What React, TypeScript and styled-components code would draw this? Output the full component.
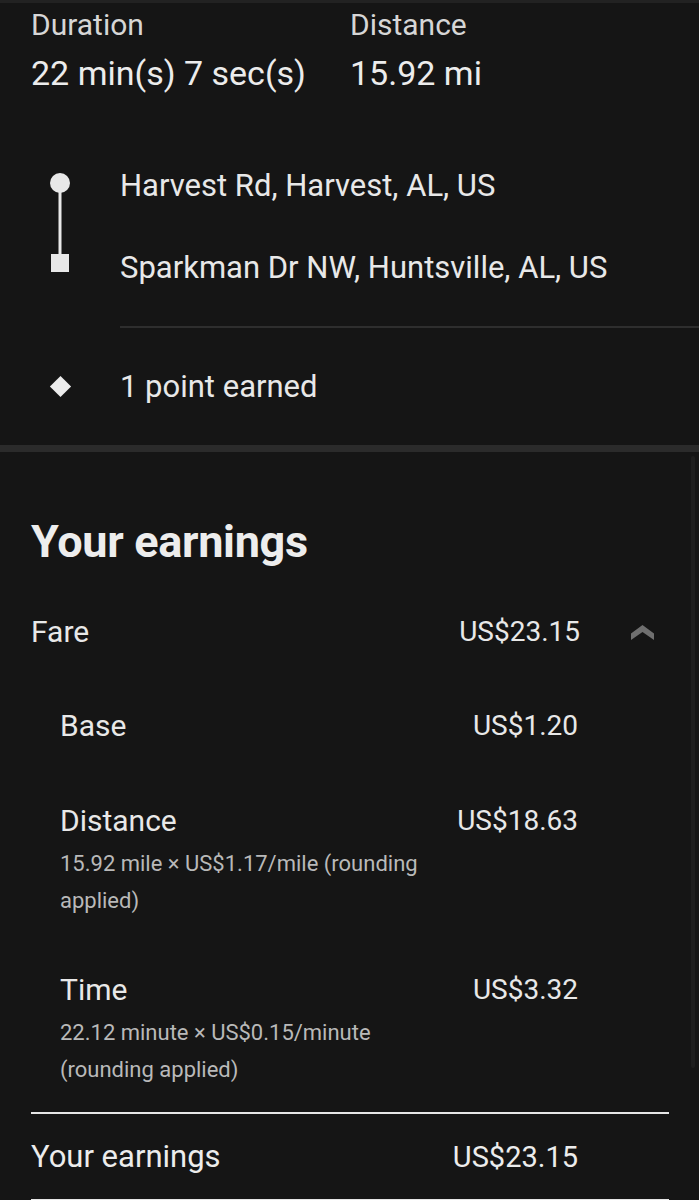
import styled, { createGlobalStyle } from "styled-components";

const GlobalStyle = createGlobalStyle`
    html, body {
        margin: 0;
        padding: 0;
        background: #151515;
    }
    body {
        font-family: Roboto, "Liberation Sans", sans-serif;
        color: #e8e8e8;
    }
`

const Page = styled.div`
    width: 699px;
    height: 1200px;
    overflow: hidden;
    background: #151515;
    border-top: 3px solid #222222;
    box-sizing: border-box;
    position: relative;
`

const StatsRow = styled.div`
    display: grid;
    grid-template-columns: 319px 1fr;
    padding: 5px 31px 0;
`

const Stat = styled.div`
    display: flex;
    flex-direction: column;
`

const StatLabel = styled.span`
    font-size: 30px;
    line-height: 34px;
    color: #d6d6d6;
`

const StatValue = styled.span`
    font-size: 34px;
    line-height: 40px;
    margin-top: 11px;
    color: #ececec;
`

const TripBlock = styled.div`
    padding-top: 76px;
    display: flex;
    flex-direction: column;
`

const IconRow = styled.div`
    display: grid;
    grid-template-columns: 120px 1fr;
    align-items: start;
`

const IconCell = styled.div<{ $offset: number }>`
    display: flex;
    justify-content: center;
    padding-right: 1px;
    padding-top: ${({ $offset }) => $offset}px;
`

const Stops = styled.div`
    display: flex;
    flex-direction: column;
    gap: 48px;
    padding-bottom: 41px;
    border-bottom: 2px solid #2e2e2e;
`

const StopText = styled.span`
    font-size: 31px;
    line-height: 34px;
    color: #e8e8e8;
`

const PointsRow = styled(IconRow)`
    padding: 42px 0 41px;
`

const Diamond = styled.div`
    width: 15px;
    height: 15px;
    background: #ececec;
    transform: rotate(45deg);
    margin-left: 1px;
`

const SectionGap = styled.div`
    height: 7px;
    background: #2b2b2b;
`

const Earnings = styled.section`
    padding: 65px 30px 0 31px;
`

const Heading = styled.h2`
    margin: 0 0 48px;
    font-size: 45px;
    line-height: 50px;
    font-weight: 700;
    letter-spacing: -0.3px;
    color: #ededed;
`

const ItemList = styled.div`
    display: flex;
    flex-direction: column;
    gap: 61px;
    padding-left: 29px;
    margin-top: 60px;
`

const LineItem = styled.div<{ $wide?: boolean }>`
    display: grid;
    grid-template-columns: 1fr auto ${({ $wide }) => ($wide ? "89px" : "91px")};
    align-items: start;
`

const ItemText = styled.div`
    display: flex;
    flex-direction: column;
`

const ItemLabel = styled.span`
    font-size: 30px;
    line-height: 34px;
    color: #e8e8e8;
`

const ItemNote = styled.span`
    font-size: 22px;
    line-height: 37px;
    margin: 7px 0 -7px;
    color: #b9b9b9;
    max-width: 370px;
`

const Amount = styled.span`
    font-size: 28px;
    line-height: 34px;
    color: #e8e8e8;
    text-align: right;
    padding-left: 20px;
`

const ChevronCell = styled.div`
    display: flex;
    justify-content: center;
    padding-top: 10px;
    padding-left: 35px;
`

const TotalRow = styled.div`
    display: grid;
    grid-template-columns: 1fr auto 91px;
    align-items: center;
    border-top: 2px solid #e6e6e6;
    border-bottom: 2px solid #e6e6e6;
    height: 89px;
    box-sizing: border-box;
    margin-top: 31px;
`

const TotalText = styled.span`
    font-size: 31px;
    color: #ececec;
`

const TotalAmount = styled.span`
    font-size: 29px;
    color: #ececec;
`

const Scrollbar = styled.div`
    position: absolute;
    right: 4px;
    top: 453px;
    width: 4px;
    height: 612px;
    background: #1e1e1e;
    border-radius: 2px;
`

const RouteIcon = () => (
    <svg width="22" height="102" viewBox="0 0 22 102">
        <circle cx="11" cy="11" r="10" fill="#e8e8e8" />
        <rect x="9.5" y="14" width="3" height="70" fill="#e8e8e8" />
        <rect x="2" y="82" width="18" height="18" fill="#e8e8e8" />
    </svg>
)

const Chevron = () => (
    <svg width="23" height="15" viewBox="0 0 23 15">
        <path d="M0 8.5 L11.5 0 L23 8.5 L23 15 L11.5 7 L0 15 Z" fill="#6f6f6f" />
    </svg>
)

const items = [
    { label: "Base", amount: "US$1.20" },
    { label: "Distance", amount: "US$18.63", note: "15.92 mile × US$1.17/mile (rounding applied)" },
    { label: "Time", amount: "US$3.32", note: "22.12 minute × US$0.15/minute (rounding applied)" },
]

export default function App() {
    return (
        <>
            <GlobalStyle />
            <Page>
                <StatsRow>
                    <Stat>
                        <StatLabel>Duration</StatLabel>
                        <StatValue>22 min(s) 7 sec(s)</StatValue>
                    </Stat>
                    <Stat>
                        <StatLabel>Distance</StatLabel>
                        <StatValue>15.92 mi</StatValue>
                    </Stat>
                </StatsRow>
                <TripBlock>
                    <IconRow>
                        <IconCell $offset={3}>
                            <RouteIcon />
                        </IconCell>
                        <Stops>
                            <StopText>Harvest Rd, Harvest, AL, US</StopText>
                            <StopText>Sparkman Dr NW, Huntsville, AL, US</StopText>
                        </Stops>
                    </IconRow>
                    <PointsRow>
                        <IconCell $offset={9}>
                            <Diamond />
                        </IconCell>
                        <StopText>1 point earned</StopText>
                    </PointsRow>
                </TripBlock>
                <SectionGap />
                <Earnings>
                    <Heading>Your earnings</Heading>
                    <LineItem $wide>
                        <ItemLabel>Fare</ItemLabel>
                        <Amount>US$23.15</Amount>
                        <ChevronCell>
                            <Chevron />
                        </ChevronCell>
                    </LineItem>
                    <ItemList>
                        {items.map((item) => (
                            <LineItem key={item.label}>
                                <ItemText>
                                    <ItemLabel>{item.label}</ItemLabel>
                                    {item.note && <ItemNote>{item.note}</ItemNote>}
                                </ItemText>
                                <Amount>{item.amount}</Amount>
                                <div />
                            </LineItem>
                        ))}
                    </ItemList>
                    <TotalRow>
                        <TotalText>Your earnings</TotalText>
                        <TotalAmount>US$23.15</TotalAmount>
                        <div />
                    </TotalRow>
                </Earnings>
                <Scrollbar />
            </Page>
        </>
    )
}
